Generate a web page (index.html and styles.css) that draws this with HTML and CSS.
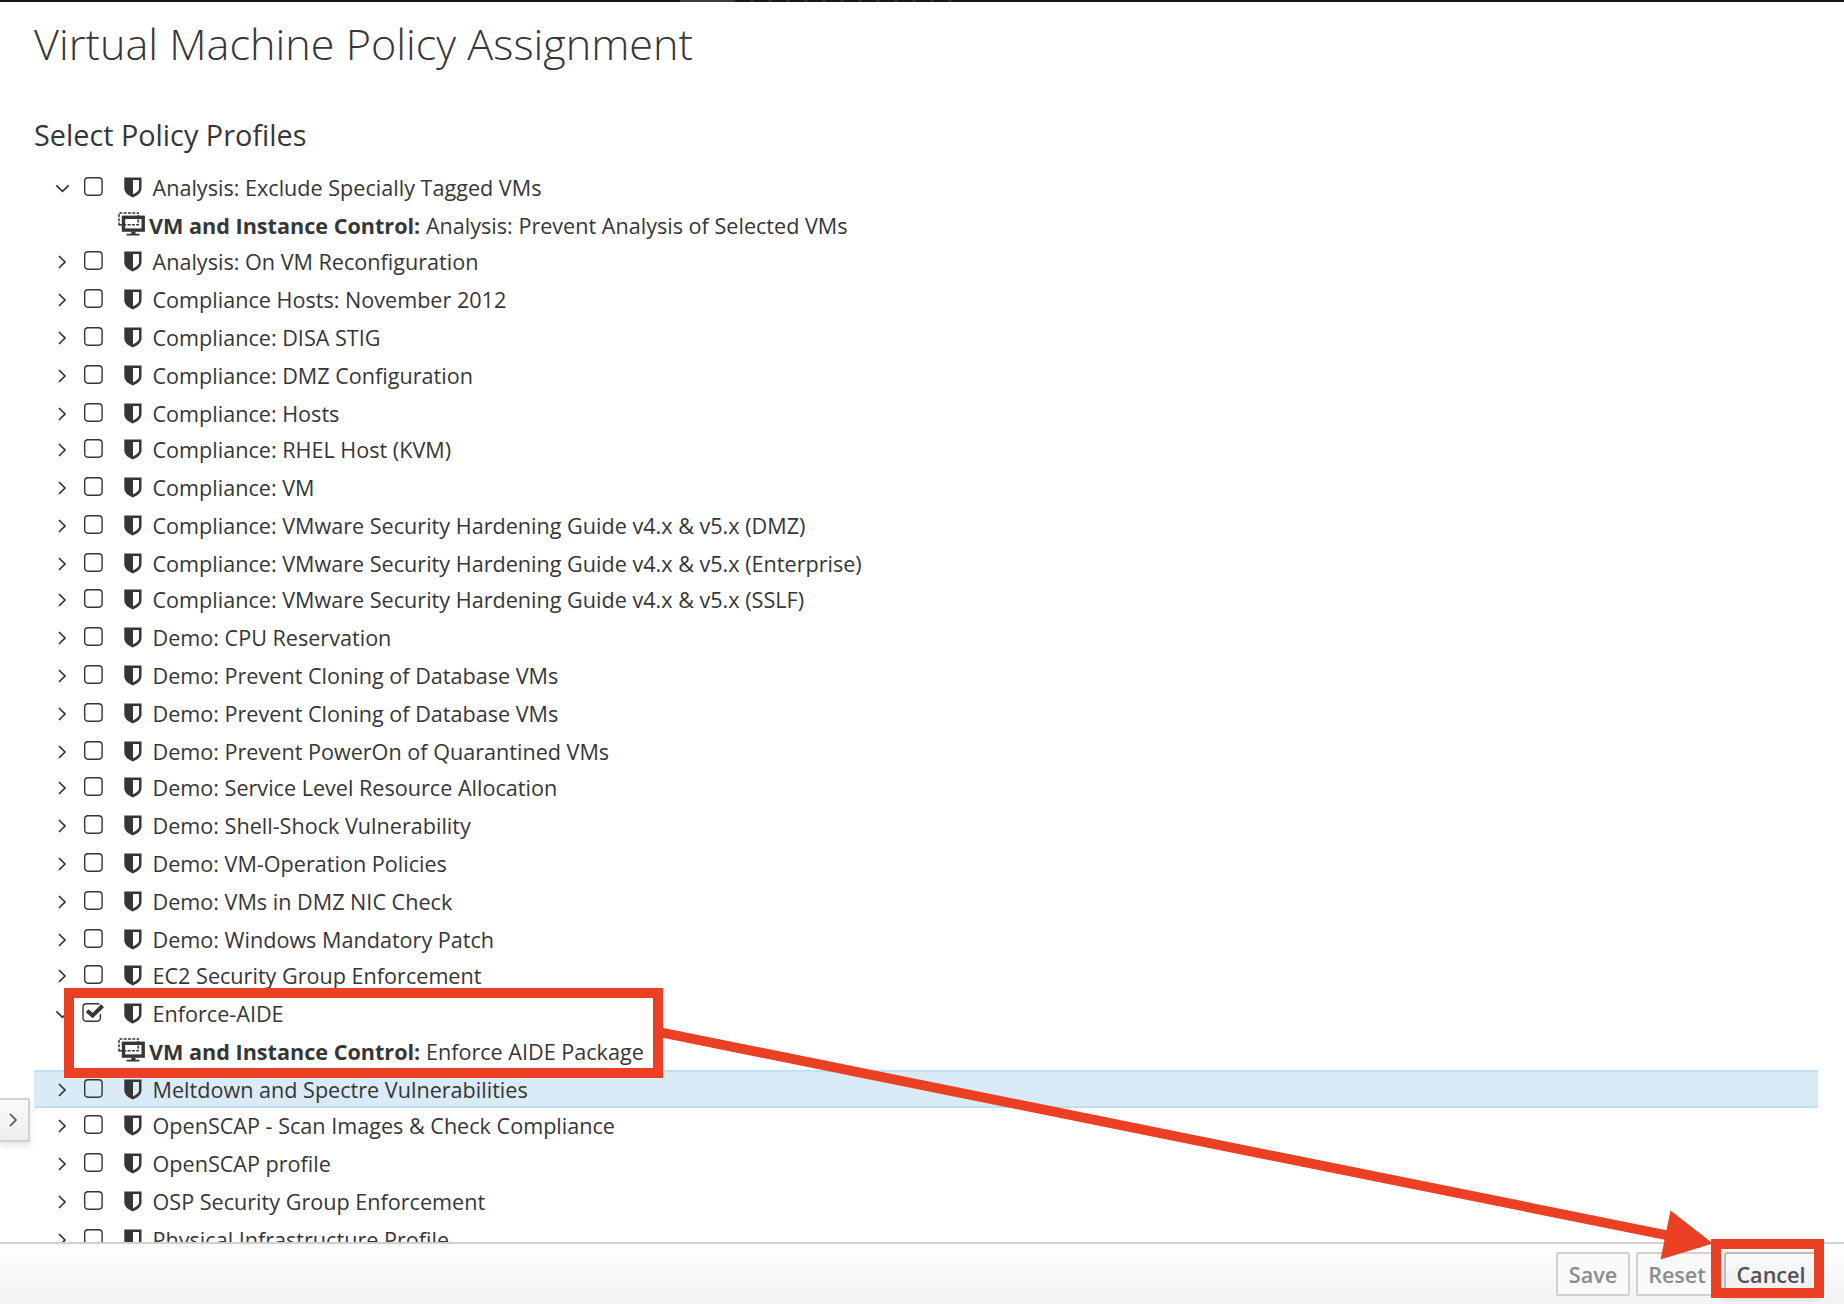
FILE: index.html
```html
<!DOCTYPE html>
<html lang="en">
<head>
<meta charset="utf-8">
<title>Virtual Machine Policy Assignment</title>
<link rel="stylesheet" href="styles.css">
</head>
<body>
<svg class="defs" aria-hidden="true">
  <symbol id="right" viewBox="0 0 14 14"><path d="M4 1 10 7 4 13" fill="none" stroke="currentColor" stroke-width="1.7"/></symbol>
  <symbol id="down" viewBox="0 0 14 14"><path d="M1.300 4.300 7.500 10.300 13.700 4.300" fill="none" stroke="currentColor" stroke-width="1.7"/></symbol>
  <symbol id="box" viewBox="0 0 22 20"><rect x="2.7" y=".8" width="17.4" height="17.4" rx="3.4" fill="none" stroke="currentColor" stroke-width="1.4"/></symbol>
  <symbol id="checked" viewBox="0 0 22 20"><path d="M17.6 1.2Q16.8.8 15.6.8H4.4A3.4 3.4 0 0 0 1 4.2V14.8a3.4 3.4 0 0 0 3.4 3.4H15a3.4 3.4 0 0 0 3.4-3.4V11" fill="none" stroke="currentColor" stroke-width="1.4"/><path d="M5.2 7.7 10.6 12.6 20.6 2.8" fill="none" stroke="currentColor" stroke-width="4"/></symbol>
  <symbol id="shield" viewBox="0 0 18 21"><path fill="currentColor" fill-rule="evenodd" d="M.3.5H17.5V11.5C17.5 16 12.5 19 8.9 20.5 5.3 19 .3 16 .3 11.5ZM9 3V17.4C12 15.900 15 14 15 11.500V3Z"/></symbol>
  <symbol id="monitor" viewBox="0 0 28 24"><path d="M1 13.500V1H21" fill="none" stroke="currentColor" stroke-width="1.500" stroke-dasharray="3 1.300"/><path d="M1 12.700H20.200V1" fill="none" stroke="currentColor" stroke-width="1.500" stroke-dasharray="3 1.300"/><rect x="5.500" y="5.300" width="19.700" height="12.800" fill="none" stroke="currentColor" stroke-width="3.400"/><path fill="currentColor" d="M13.300 19.500h4.200v2.300h4v1.800h-13v-1.800h4.800z"/></symbol>
</svg>
<div class="topbar"><span class="tab"></span><span class="specks"></span></div>
<main class="content">
  <h1>Virtual Machine Policy Assignment</h1>
  <h2>Select Policy Profiles</h2>
  <ul class="tree" id="tree"></ul>
</main>
<footer class="footer">
  <button class="btn save" disabled>Save</button>
  <button class="btn reset" disabled>Reset</button>
  <button class="btn cancel">Cancel</button>
</footer>
<button class="drawer" aria-label="Expand"><svg class="chev"><use href="#right"/></svg></button>
<div class="frame frame-policy"></div>
<svg class="arrow" viewBox="0 0 1844 1304"><path d="M660 1032.200 1668 1235.500" stroke="#eb4024" stroke-width="9.800"/><path d="M1670.500 1210.500 1713 1243.500 1660.500 1259.500Z" fill="#eb4024"/></svg>
<div class="frame frame-cancel"></div>
<script src="tree.js"></script>
</body>
</html>
```
FILE: styles.css
```css
* { box-sizing: border-box; }
body {
  margin: 0;
  height: 1304px;
  overflow: hidden;
  display: flex;
  flex-direction: column;
  background: #fff;
  color: #363636;
  font-family: "Open Sans", sans-serif;
  font-size: 21.6px;
}
.defs { position: absolute; width: 0; height: 0; }
.topbar { flex: 0 0 2px; display: flex; padding-left: 680px; background: #181516; }
.tab { width: 55px; background: #3d3b3c; }
.specks {
  width: 220px;
  margin-left: 8px;
  background: repeating-linear-gradient(90deg, #181516 0 7px, #353334 8px 10px, #181516 11px 18px);
}
.content { flex: 1 1 0; min-height: 0; overflow: hidden; padding: 10px 26px 0 34px; }
h1 { margin: 0; font-size: 43.2px; line-height: 64px; font-weight: 300; white-space: nowrap; }
h2 { margin: 39px 0 13px; font-size: 28.8px; line-height: 40px; font-weight: 400; white-space: nowrap; }
.tree { margin: 0; padding: 0; list-style: none; }
.row { display: flex; height: 38px; padding-left: 21px; line-height: 39px; white-space: nowrap; }
.row.short { margin-bottom: -2px; }
.row.hover { background: #d9ebf6; box-shadow: inset 0 2px #bee1f4, inset 0 -2px #c1dff2; }
.row svg { flex: none; }
.chev { width: 14px; height: 14px; }
.row .chev { margin: 13px 12px 0 0; }
.check { width: 22px; height: 20px; margin: 9px 0 0 1px; }
.shield { width: 18px; height: 21px; margin: 9px 10.5px 0 20px; }
.monitor { width: 28px; height: 24px; margin: 6px 3px 0 63px; }
.footer {
  flex: 0 0 62px;
  display: flex;
  justify-content: flex-end;
  align-items: flex-start;
  gap: 6px;
  padding: 8px 26px 0;
  border-top: 2px solid #d0d0d0;
  background: linear-gradient(#fff, #f2f2f2);
}
.btn {
  height: 44px;
  padding: 1px 0 0;
  border: 2px solid #d1d1d1;
  border-radius: 2px;
  background: #fafafa;
  color: #8b8d8f;
  font: 600 21.6px/39px "Open Sans", sans-serif;
}
.save { width: 74px; }
.reset { width: 82px; }
.cancel {
  width: 94px;
  border-color: #bbb;
  background: linear-gradient(#fafafa, #ededed);
  box-shadow: 0 4px 6px rgba(3, 3, 3, .1);
  color: #4d5258;
}
.drawer {
  position: absolute;
  left: 0;
  top: 1098px;
  width: 30px;
  height: 44px;
  display: flex;
  align-items: center;
  padding: 0 0 0 5.5px;
  border: 2px solid #d1d1d1;
  border-left: 0;
  border-radius: 0 2px 2px 0;
  background: linear-gradient(#fafafa, #ededed);
  box-shadow: 0 4px 6px rgba(3, 3, 3, .1);
  color: #4d5258;
}
.frame { position: absolute; border: 10px solid #eb4024; }
.frame-policy { left: 64px; top: 988px; width: 599px; height: 90px; }
.frame-cancel { left: 1711px; top: 1239px; width: 113px; height: 59px; }
.arrow { position: absolute; left: 0; top: 0; width: 1844px; height: 1304px; pointer-events: none; }
```
FILE: tree.js
```js
const profiles = [
  { name: "Analysis: Exclude Specially Tagged VMs", policy: "Analysis: Prevent Analysis of Selected VMs" },
  { name: "Analysis: On VM Reconfiguration" },
  { name: "Compliance Hosts: November 2012" },
  { name: "Compliance: DISA STIG" },
  { name: "Compliance: DMZ Configuration" },
  { name: "Compliance: Hosts" },
  { name: "Compliance: RHEL Host (KVM)" },
  { name: "Compliance: VM" },
  { name: "Compliance: VMware Security Hardening Guide v4.x &amp; v5.x (DMZ)" },
  { name: "Compliance: VMware Security Hardening Guide v4.x &amp; v5.x (Enterprise)" },
  { name: "Compliance: VMware Security Hardening Guide v4.x &amp; v5.x (SSLF)" },
  { name: "Demo: CPU Reservation" },
  { name: "Demo: Prevent Cloning of Database VMs" },
  { name: "Demo: Prevent Cloning of Database VMs" },
  { name: "Demo: Prevent PowerOn of Quarantined VMs" },
  { name: "Demo: Service Level Resource Allocation" },
  { name: "Demo: Shell-Shock Vulnerability" },
  { name: "Demo: VM-Operation Policies" },
  { name: "Demo: VMs in DMZ NIC Check" },
  { name: "Demo: Windows Mandatory Patch" },
  { name: "EC2 Security Group Enforcement" },
  { name: "Enforce-AIDE", policy: "Enforce AIDE Package", checked: true },
  { name: "Meltdown and Spectre Vulnerabilities", hover: true },
  { name: "OpenSCAP - Scan Images &amp; Check Compliance" },
  { name: "OpenSCAP profile" },
  { name: "OSP Security Group Enforcement" },
  { name: "Physical Infrastructure Profile" }
];

const shortRows = [1, 6, 10, 15, 20, 24];
const rows = [];

const icon = (cls, id) => `<svg class="${cls}"><use href="#${id}"/></svg>`;

function addRow(content, hover) {
  const cls = ["row"];
  if (shortRows.includes(rows.length)) cls.push("short");
  if (hover) cls.push("hover");
  rows.push(`<li class="${cls.join(" ")}">${content}</li>`);
}

for (const p of profiles) {
  addRow(
    icon("chev", p.policy ? "down" : "right") +
    icon("check", p.checked ? "checked" : "box") +
    icon("shield", "shield") +
    `<span class="label">${p.name}</span>`,
    p.hover
  );
  if (p.policy) {
    addRow(icon("monitor", "monitor") + `<span class="label"><strong>VM and Instance Control:</strong> ${p.policy}</span>`);
  }
}
document.getElementById("tree").innerHTML = rows.join("");
```
